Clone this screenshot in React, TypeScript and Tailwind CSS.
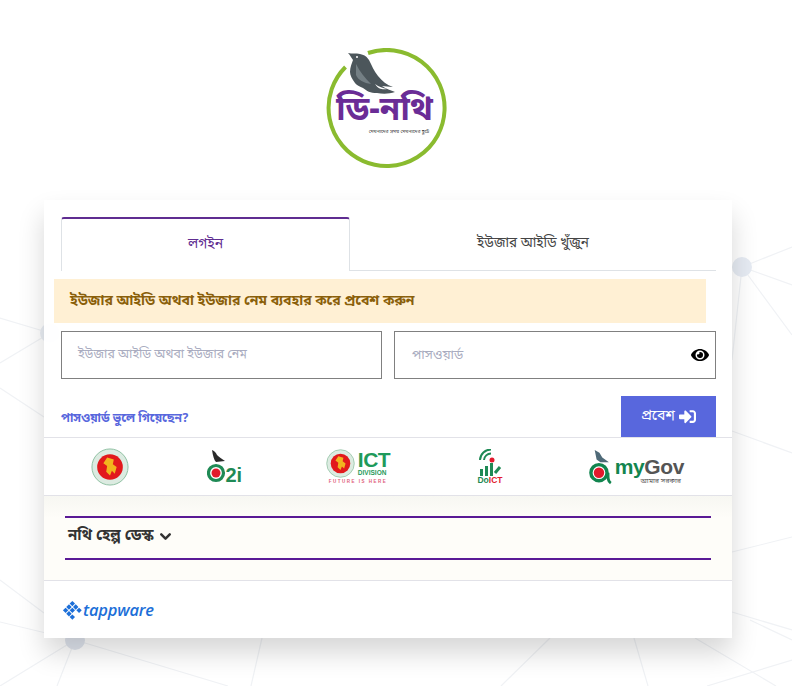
import React from "react";
import { FaEye, FaSignInAlt } from "react-icons/fa";
import { ChevronDown } from "lucide-react";

const bn = "font-['Noto_Sans_Bengali','Lohit_Bengali','Noto_Sans','Liberation_Sans',sans-serif]";

const lines: number[][] = [
  [742,267,792,247],[742,267,792,285],[742,267,792,335],[742,267,732,360],
  [732,431,792,453],[732,552,792,537],[732,612,792,630],
  [50,333,0,318],[50,333,0,363],[0,388,44,417],[0,580,44,613],[0,622,75,640],
  [75,640,0,686],[75,640,57,686],[75,640,228,686],[262,638,251,686],[550,638,501,686],
  [634,638,648,686],[695,638,776,686],[707,686,792,660],[750,620,792,640],
];

function Background() {
  return (
    <svg className="absolute inset-0" width="792" height="686" viewBox="0 0 792 686">
      {lines.map((l, i) => (
        <line key={i} x1={l[0]} y1={l[1]} x2={l[2]} y2={l[3]} stroke="#f0f2f5" strokeWidth="1.2" />
      ))}
      <circle cx="742" cy="267" r="10" fill="#e6ebf3" />
      <circle cx="75" cy="640" r="10" fill="#e0e5ee" />
      <circle cx="50" cy="333" r="10" fill="#e9edf4" />
    </svg>
  );
}

function Logo() {
  return (
    <svg width="130" height="120" viewBox="0 0 130 120" className="block">
      <path d="M45 5 A58 58 0 1 1 22.5 19" fill="none" stroke="#8abb2f" strokeWidth="4" />
      <path d="M25 5 C29 6 33 5 37 6 C42 7 44 9 46 12 C49 18 51 23 55 28 C59 33 64 37 70 39 C66 39 62 38 59 38 C63 41 68 42 72 44 C66 46 60 46 54 45 C47 45 44 43 40 40 C36 38 33 37 32 35 C29 31 27 27 27 24 C27 19 29 15 30 12 C28 9 27 7 25 5 Z" fill="#4c565b" />
      <path d="M33 16 C37 24 42 30 48 36 C41 35 35 32 33 27 Z" fill="#747f84" />
      <path d="M52 36 C56 39 60 40 64 41 C60 42 55 41 52 36 Z" fill="#fff" />
      <circle cx="34" cy="9" r="1" fill="#fff" />
      <text x="61.5" y="72" textAnchor="middle" fontSize="33" fontWeight="700" fill="#6a2c96" fontFamily="'Noto Sans Bengali','Noto Sans',sans-serif">ডি-নথি</text>
      <text x="76" y="85" textAnchor="middle" fontSize="5" fill="#333" fontFamily="'Noto Sans Bengali','Noto Sans',sans-serif">মেঘনাদের সময় মেঘনাদের ছুটে</text>
    </svg>
  );
}

function Seal({ size }: { size: number }) {
  return (
    <svg width={size} height={size} viewBox="0 0 40 40">
      <circle cx="20" cy="20" r="19" fill="#dcebe1" stroke="#8cbfa0" strokeWidth="1" />
      <circle cx="20" cy="20" r="13.5" fill="#e2191c" />
      <path d="M17 10 L24 12 L23 17 L27 20 L25 27 L22 24 L20 29 L16 25 L17 19 L13 16 Z" fill="#f2b41e" />
    </svg>
  );
}

function A2i() {
  return (
    <svg width="38" height="34" viewBox="0 0 38 34">
      <path d="M5 0 C8 1 9 3 10 5 C12 7 15 9 18 11 L9 12 C7 10 6 6 5 0 Z" fill="#2a2a2a" />
      <circle cx="9" cy="23" r="7.5" fill="#fff" stroke="#1f8a55" strokeWidth="3.2" />
      <circle cx="9" cy="23" r="4.5" fill="#e2192c" />
      <text x="18.5" y="32" fontSize="20" fontWeight="700" fill="#1f8a55" fontFamily="'Liberation Sans',sans-serif">2i</text>
    </svg>
  );
}

function IctDivision() {
  return (
    <div className="flex flex-col items-center w-[64px]">
      <div className="flex items-center gap-[3px]">
        <Seal size={29} />
        <div className="flex flex-col font-['Liberation_Sans',sans-serif] font-bold text-[#1f9a5b] leading-none">
          <span className="text-[21px] leading-[19px] tracking-[-0.5px]">ICT</span>
          <span className="text-[6.5px] leading-[8px]">DIVISION</span>
        </div>
      </div>
      <span className="mt-[1px] text-[4.5px] leading-[6px] tracking-[1.5px] font-['Liberation_Sans',sans-serif] font-bold text-[#e0607a]">FUTURE IS HERE</span>
    </div>
  );
}

function DoIct() {
  return (
    <div className="flex flex-col items-center w-[24px]">
      <svg width="24" height="27" viewBox="0 0 24 27">
        <path d="M2 11 A11 11 0 0 1 13 0.5" fill="none" stroke="#1f8a55" strokeWidth="2" />
        <path d="M6 11 A7 7 0 0 1 13 4.5" fill="none" stroke="#1f8a55" strokeWidth="2" />
        <circle cx="14" cy="11" r="2.5" fill="#e2192c" />
        <rect x="2" y="20" width="3" height="7" fill="#1f8a55" />
        <rect x="7" y="17" width="3" height="10" fill="#1f8a55" />
        <rect x="12" y="14" width="3" height="13" fill="#1f8a55" />
        <path d="M17 24 L22 18" stroke="#1f8a55" strokeWidth="3" />
      </svg>
      <span className="text-[8.5px] leading-[9px] font-bold font-['Liberation_Sans',sans-serif] text-[#1f8a55]">Do<span className="text-[#e2192c]">ICT</span></span>
    </div>
  );
}

function MyGov() {
  return (
    <div className="flex items-end w-[95px] h-[37px]">
      <svg width="24" height="36" viewBox="0 0 24 36">
        <path d="M6 0 L11 3 L14 8 L21 13 L12 13 L8 10 Z" fill="#4f6a78" />
        <circle cx="10.5" cy="24" r="8.5" fill="#fff" stroke="#12854f" strokeWidth="3.6" />
        <circle cx="10.5" cy="24" r="5.5" fill="#e2192c" />
        <path d="M20 24 C20 30 20 33 23 35" fill="none" stroke="#12854f" strokeWidth="3" />
      </svg>
      <div className="flex flex-col ml-[3px] font-['Liberation_Sans',sans-serif] font-bold leading-none">
        <div className="text-[21px] leading-[23px] tracking-[-0.4px]">
          <span className="text-[#12854f]">my</span><span className="text-[#555]">Gov</span>
        </div>
        <span className={`text-[7px] leading-[7px] font-normal text-[#555] text-right pr-[3px] ${bn}`}>আমার সরকার</span>
      </div>
    </div>
  );
}

function Tappware() {
  return (
    <div className="flex items-center">
      <svg width="20" height="20" viewBox="0 0 21 20">
        <g fill="#1d6fd8" transform="rotate(45 10.5 10)">
          <rect x="4" y="3" width="4" height="4" /><rect x="9" y="3" width="4" height="4" /><rect x="14" y="3" width="4" height="4" />
          <rect x="4" y="8" width="4" height="4" /><rect x="9" y="8" width="4" height="4" />
          <rect x="4" y="13" width="4" height="4" /><rect x="14" y="13" width="4" height="4" /><rect x="9" y="13" width="4" height="4" />
        </g>
      </svg>
      <span className="ml-[1px] text-[16.5px] leading-5 font-semibold italic tracking-[-0.2px] text-[#1d6fd8] font-['Open_Sans',sans-serif]">tappware</span>
    </div>
  );
}

export default function App() {
  return (
    <div className={`relative w-[792px] h-[686px] overflow-hidden bg-white ${bn}`}>
      <Background />
      <div className="relative w-[776px] flex flex-col items-center">
        <div className="mt-[48px] mb-[32px] h-[120px] w-[130px]"><Logo /></div>
        <div className="w-[688px] h-[438px] flex flex-col bg-white/95 shadow-[0_15px_25px_rgba(0,0,0,0.16)]">
          <div className="ml-[17px] mr-[16px] mt-[17px] flex h-[54px] border-b border-[#dee2e6] text-sm">
            <div className="w-[289px] h-[54px] flex items-center justify-center bg-white border-x border-[#dee2e6] border-t-2 border-t-[#5f2d91] rounded-t-[3px] text-[#5f2d91]">লগইন</div>
            <div className="flex-1 flex items-center justify-center pt-[2px] text-[13.5px] text-[#444]">ইউজার আইডি খুঁজুন</div>
          </div>
          <div className="ml-[10px] mt-[8px] w-[652px] h-[44px] flex items-center pl-[16px] bg-[#fff0d4] text-[#8a5f0a] font-bold text-[14px]">ইউজার আইডি অথবা ইউজার নেম ব্যবহার করে প্রবেশ করুন</div>
          <div className="ml-[17px] mr-[16px] mt-[8px] flex gap-[12px]">
            <div className="w-[321px] h-[48px] border border-[#808080] bg-white flex items-center pl-[16px] pt-[1px] text-[12.4px] text-[#a9acc0]">ইউজার আইডি অথবা ইউজার নেম</div>
            <div className="relative flex-1 h-[48px] border border-[#808080] bg-white flex items-center pl-[17px] pt-[1px] text-[13px] text-[#a9acc0]">
              পাসওয়ার্ড
              <FaEye className="absolute right-[6px] top-[14px] text-[18px] text-black" />
            </div>
          </div>
          <div className="ml-[17px] mr-[16px] mt-[17px] h-[41px] flex justify-between items-center">
            <span className="text-[12px] font-bold text-[#5867dd] pt-[4px]">পাসওয়ার্ড ভুলে গিয়েছেন?</span>
            <div className="w-[95px] h-[41px] bg-[#5867dd] text-white text-sm flex items-center justify-center gap-[4px]">
              প্রবেশ <FaSignInAlt className="text-[17px]" />
            </div>
          </div>
          <div className="h-[59px] border-y border-[#e2e2e8] bg-white flex items-center pl-[47px]">
            <Seal size={38} />
            <div className="ml-[78px]"><A2i /></div>
            <div className="ml-[81px]"><IctDivision /></div>
            <div className="ml-[88px]"><DoIct /></div>
            <div className="ml-[87px]"><MyGov /></div>
          </div>
          <div className="h-[85px] bg-[linear-gradient(#f7f7f2,#fefdf9_22px)] border-b border-[#e2e2e8] px-[21px] pt-[20px]">
            <div className="h-[44px] border-y-2 border-[#5a1a96] flex items-center px-[3px] pb-[3px] font-bold text-[15px] text-[#333]">
              নথি হেল্প ডেস্ক <ChevronDown size={17} strokeWidth={3.5} className="ml-[3px]" />
            </div>
          </div>
          <div className="flex-1 flex items-start pl-[18px] pt-[19px]"><Tappware /></div>
        </div>
      </div>
    </div>
  );
}
